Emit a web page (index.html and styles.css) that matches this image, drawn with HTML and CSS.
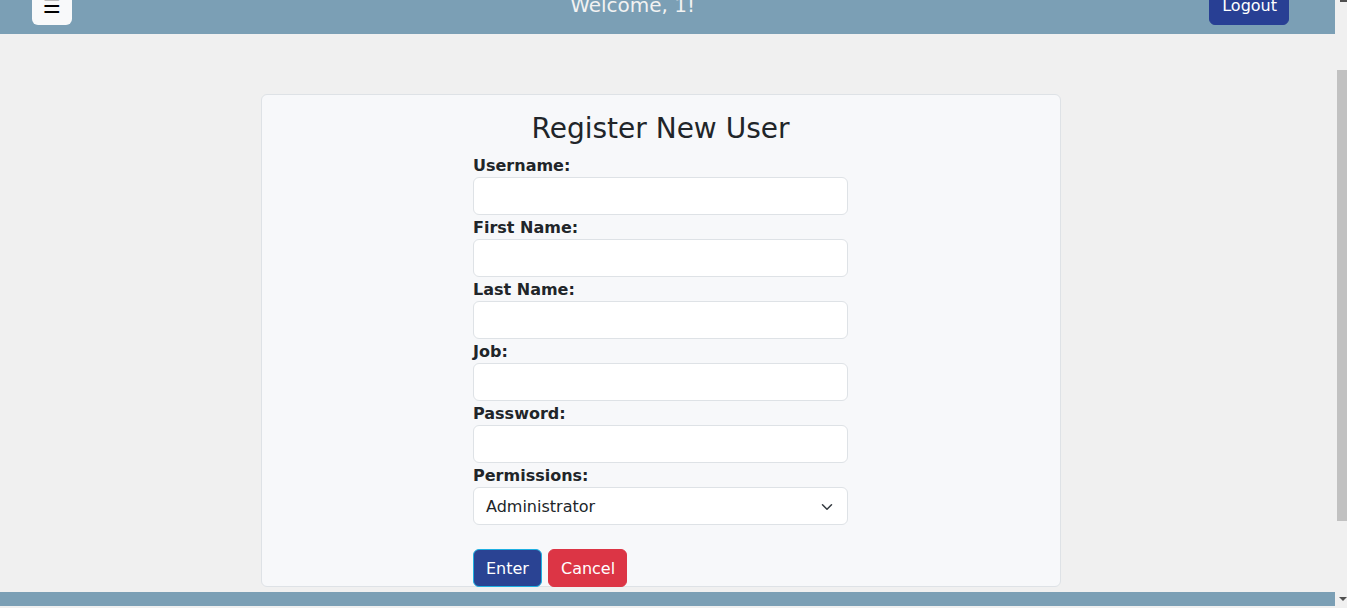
FILE: index.html
```html
<!DOCTYPE html>
<html lang="en">
<head>
<meta charset="utf-8">
<title>Register New User</title>
<link rel="stylesheet" href="styles.css">
</head>
<body>
<div class="page">
  <header class="topbar">
    <button class="menu-btn" type="button">☰</button>
    <span class="welcome">Welcome, 1!</span>
    <button class="logout-btn" type="button">Logout</button>
  </header>
  <main class="main">
    <section class="card">
      <h3 class="card-title">Register New User</h3>
      <form class="form">
        <label class="lbl" for="username">Username:</label>
        <input class="field" id="username" type="text">
        <label class="lbl" for="first">First Name:</label>
        <input class="field" id="first" type="text">
        <label class="lbl" for="last">Last Name:</label>
        <input class="field" id="last" type="text">
        <label class="lbl" for="job">Job:</label>
        <input class="field" id="job" type="text">
        <label class="lbl" for="password">Password:</label>
        <input class="field" id="password" type="password">
        <label class="lbl" for="perm">Permissions:</label>
        <div class="select">
          <span class="select-text">Administrator</span>
          <svg class="chev" width="16" height="12" viewBox="0 0 16 16" preserveAspectRatio="xMidYMid meet"><path d="m2 5 6 6 6-6" fill="none" stroke="#343a40" stroke-width="2" stroke-linecap="round" stroke-linejoin="round"/></svg>
        </div>
        <div class="actions">
          <button class="btn btn-enter" type="button">Enter</button>
          <button class="btn btn-cancel" type="button">Cancel</button>
        </div>
      </form>
    </section>
  </main>
  <footer class="footer"></footer>
</div>
<div class="scrollbar">
  <div class="sb-up"></div>
  <div class="sb-thumb"></div>
  <div class="sb-down"></div>
</div>
</body>
</html>
```
FILE: styles.css
```css
* { box-sizing: border-box; }
html, body {
  margin: 0;
  height: 608px;
  overflow: hidden;
}
body {
  display: flex;
  background: #f0f0f0;
  font-family: "DejaVu Sans", Verdana, sans-serif;
  color: #212529;
}
.page {
  flex: 1;
  display: flex;
  flex-direction: column;
  height: 608px;
}
.topbar {
  height: 34px;
  flex: none;
  background: #7b9fb5;
  display: flex;
  align-items: flex-end;
  justify-content: space-between;
  padding: 0 46px 9px 32px;
  overflow: hidden;
}
.menu-btn {
  width: 40px;
  height: 38px;
  border: 0;
  border-radius: 6px;
  background: #f8f9fa;
  color: #000;
  font-family: "DejaVu Sans", sans-serif;
  font-size: 20px;
  line-height: 38px;
  padding: 0;
  flex: none;
}
.welcome {
  color: #f2f2f2;
  font-size: 20px;
  line-height: 30px;
  margin-bottom: 5px;
  margin-right: 16px;
}
.logout-btn {
  height: 38px;
  border: 1px solid #283f94;
  border-radius: 6px;
  background: #283f94;
  color: #fff;
  font-family: "DejaVu Sans", sans-serif;
  font-size: 16px;
  line-height: 24px;
  padding: 6px 11px 6px 12px;
  flex: none;
}
.main {
  flex: 1;
  display: flex;
  justify-content: center;
  align-items: flex-start;
  padding: 60px 13px 0 0;
}
.card {
  width: 800px;
  height: 493px;
  background: #f7f8fa;
  border: 1px solid #dee2e6;
  border-radius: 6px;
  padding: 17px 1px 0 0;
  display: flex;
  flex-direction: column;
  align-items: center;
}
.card-title {
  margin: 0 0 7px;
  font-size: 28px;
  font-weight: 400;
  line-height: 1.2;
}
.form {
  width: 375px;
  display: flex;
  flex-direction: column;
}
.lbl {
  font-size: 16px;
  font-weight: 700;
  line-height: 22px;
  padding-top: 2px;
}
.field, .select {
  height: 38px;
  width: 100%;
  border: 1px solid #dee2e6;
  border-radius: 6px;
  background: #fff;
  font-family: "DejaVu Sans", sans-serif;
  font-size: 16px;
  padding: 6px 12px;
  margin: 0;
}
.select {
  display: flex;
  align-items: center;
  justify-content: space-between;
  padding: 2px 12px 0 12px;
  line-height: 24px;
}
.chev { flex: none; }
.actions {
  margin-top: 24px;
  display: flex;
  gap: 6px;
}
.btn {
  height: 38px;
  border-radius: 6px;
  color: #fff;
  font-family: "DejaVu Sans", sans-serif;
  font-size: 16px;
  line-height: 24px;
  padding: 7px 12px 5px;
}
.btn-enter {
  background: #2a4393;
  border: 1px solid #1fb0e2;
}
.btn-cancel {
  background: #dc3545;
  border: 1px solid #dc3545;
  padding-right: 11px;
}
.footer {
  height: 14px;
  flex: none;
  background: #7b9fb5;
  margin-bottom: 2px;
}
.scrollbar {
  width: 12px;
  flex: none;
  height: 608px;
  background: #f0f0f0;
  display: flex;
  flex-direction: column;
  align-items: flex-end;
}
.sb-up {
  width: 7px;
  height: 2px;
  background: #505050;
}
.sb-thumb {
  width: 10px;
  height: 451px;
  background: #c1c1c1;
  margin-top: 68px;
}
.sb-down {
  width: 0;
  height: 0;
  border-left: 4px solid transparent;
  border-right: 4px solid transparent;
  border-top: 4px solid #505050;
  margin-top: 76px;
}
```
